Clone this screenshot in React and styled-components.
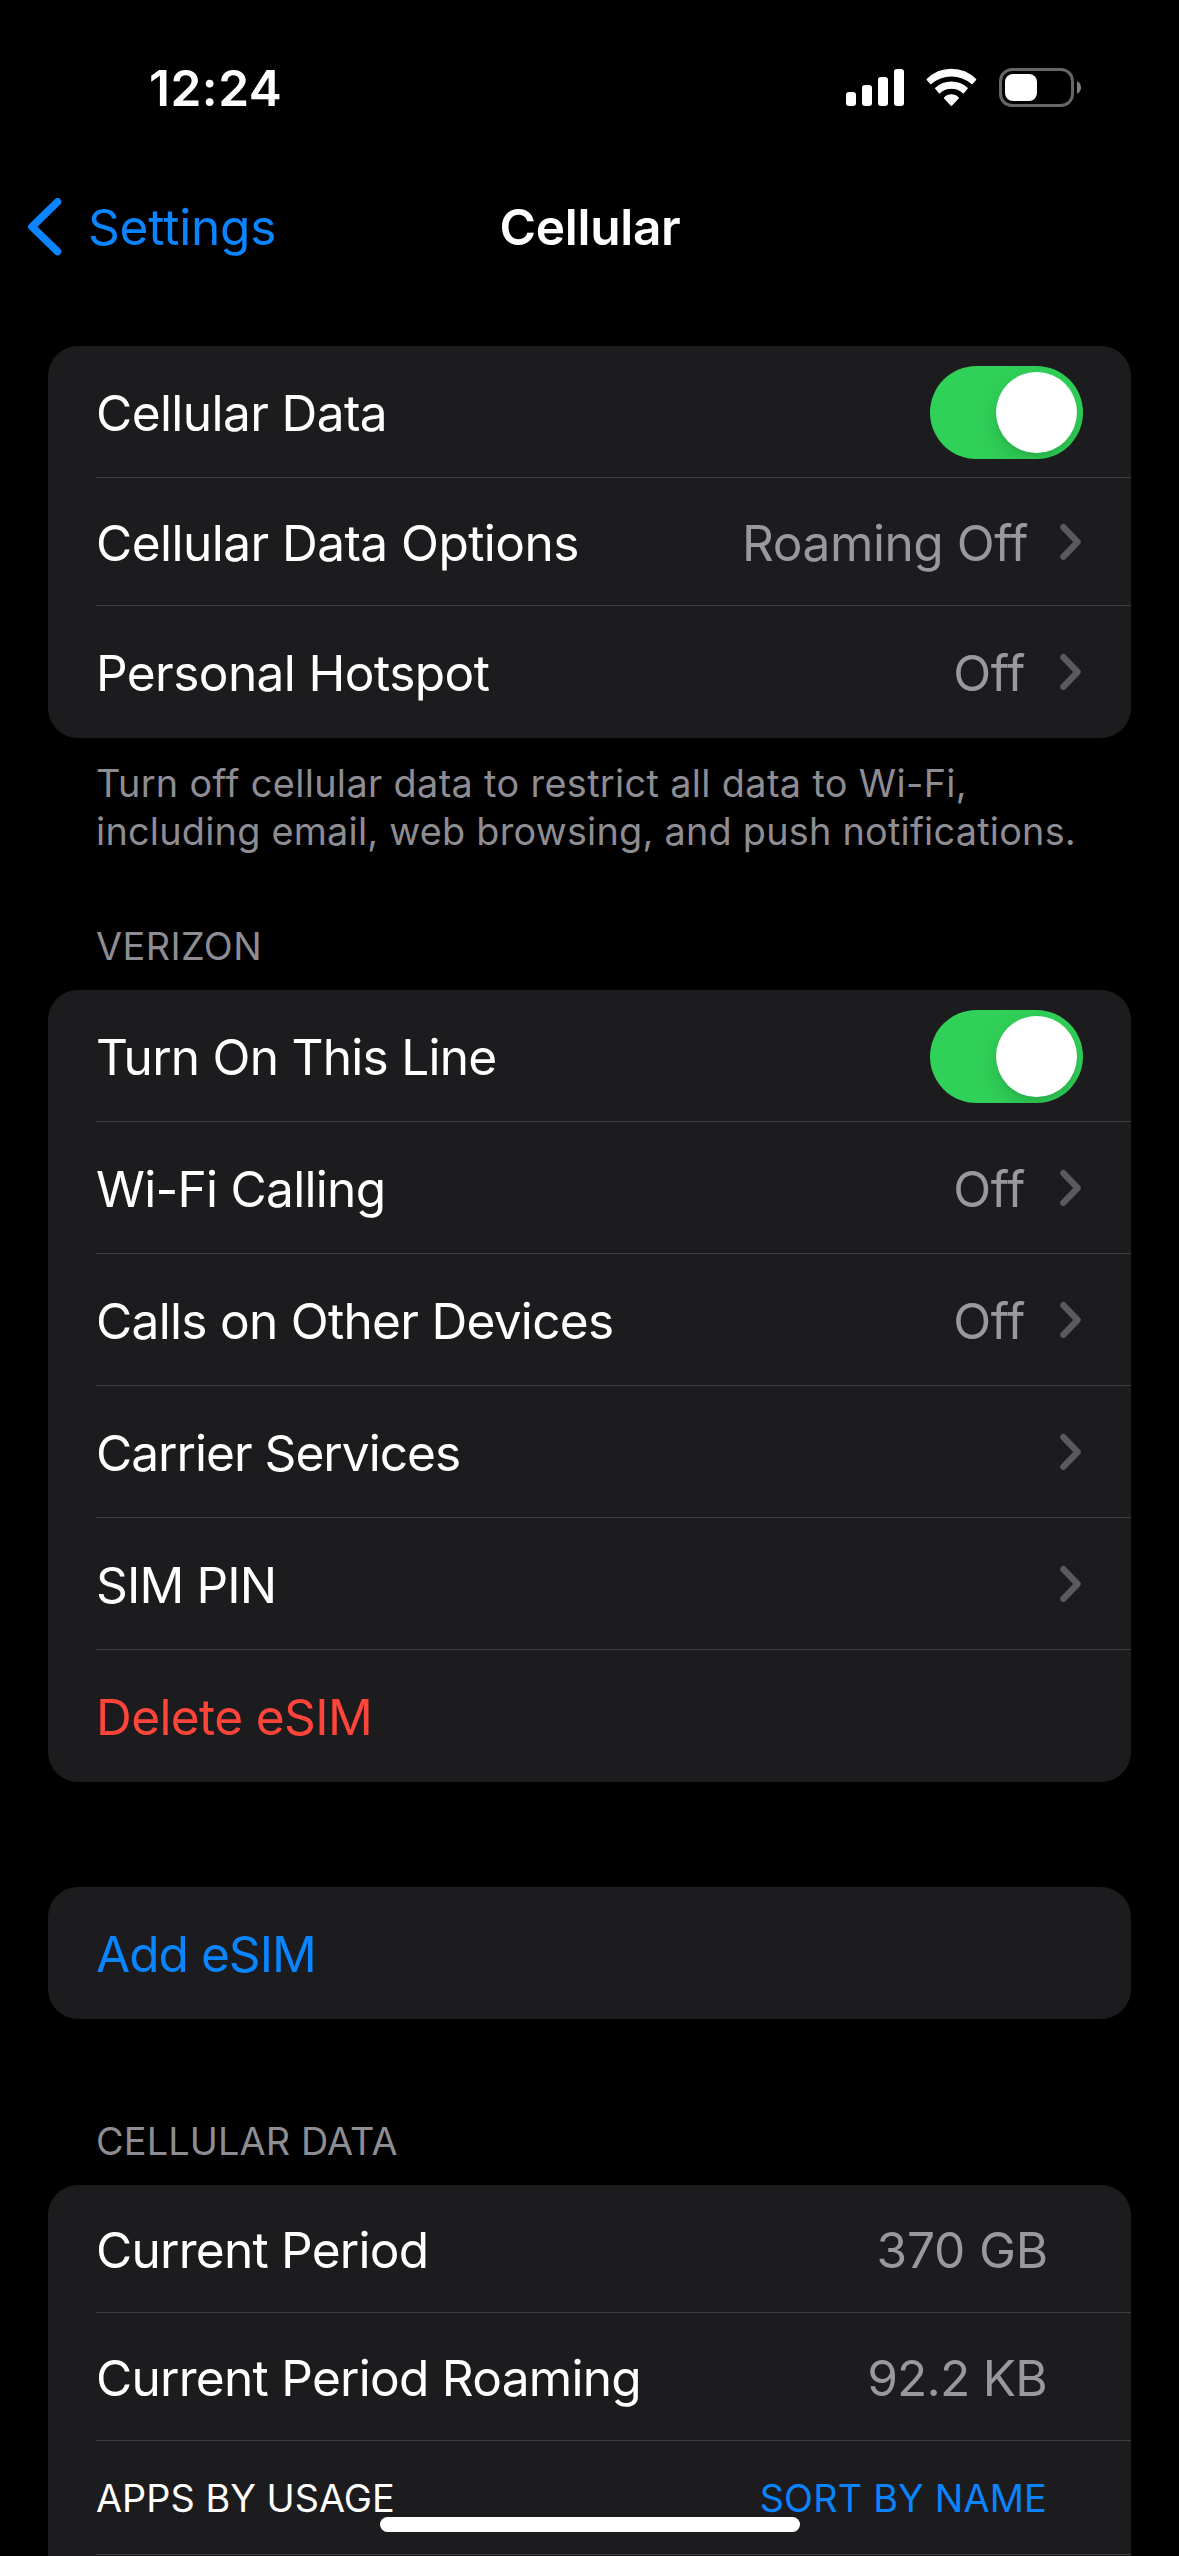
import React from 'react'
import styled, { createGlobalStyle, css } from 'styled-components'

const GlobalStyle = createGlobalStyle`
  body {
    margin: 0;
    background: #000000;
  }
`

const Screen = styled.div`
  position: relative;
  width: 1179px;
  height: 2556px;
  overflow: hidden;
  background: #000000;
  color: #ffffff;
  font-family: Inter, 'Liberation Sans', sans-serif;
  font-size: 49.6px;
  line-height: 60px;
  white-space: nowrap;
`

const StatusBar = styled.header`
  display: flex;
  align-items: center;
  justify-content: space-between;
  box-sizing: border-box;
  height: 175px;
  padding: 0 98px 0 149px;
`

const Time = styled.span`
  padding-top: 1px;
  font-weight: 600;
  letter-spacing: 0.5px;
`

const StatusIcons = styled.div`
  display: flex;
  align-items: center;
  gap: 22px;

  svg {
    display: block;
  }
`

const NavBar = styled.nav`
  display: grid;
  grid-template-columns: 1fr auto 1fr;
  align-items: center;
  height: 104px;
`

const Back = styled.a`
  display: flex;
  align-items: center;
  gap: 26px;
  padding-left: 28px;
  color: #0a84ff;
  letter-spacing: -0.2px;
`

const Title = styled.h1`
  margin: 0;
  padding-left: 1px;
  font-size: inherit;
  font-weight: 600;
  letter-spacing: -0.3px;
`

const Content = styled.main`
  padding: 67px 48px 0;
`

const Section = styled.section`
  margin-top: ${props => props.$spacing || 0}px;
`

const smallText = css`
  font-size: 37.8px;
  line-height: 48px;
`

const SectionTitle = styled.h2`
  ${smallText}
  margin: 0;
  padding: 0 48px 20px;
  color: #8d8d93;
  font-weight: 400;
  letter-spacing: ${props => props.$tracking}px;
`

const SectionNote = styled.p`
  ${smallText}
  margin: 0;
  padding: 21px 48px 0;
  color: #8d8d93;
`

const NoteLine = styled.span`
  display: block;
  letter-spacing: ${props => props.$tracking}px;
`

const Card = styled.div`
  overflow: hidden;
  background: #1c1c1e;
  border-radius: ${props => (props.$open ? '30px 30px 0 0' : '30px')};
`

const Row = styled.div`
  display: flex;
  align-items: center;
  box-sizing: border-box;
  height: ${props => props.$height || 132}px;
  margin-left: 48px;
  padding-right: ${props => props.$end || 50}px;
  box-shadow: inset 0 -1px #3d3d41;

  &:last-child {
    box-shadow: none;
  }
`

const colors = {
  red: '#ff453a',
  blue: '#0a84ff',
}

const Label = styled.span`
  padding-top: 2px;
  margin-right: auto;
  color: ${props => colors[props.$color] || '#ffffff'};
  letter-spacing: ${props => props.$tracking}px;
`

const Value = styled.span`
  padding-top: 2px;
  color: #98989f;
  letter-spacing: ${props => props.$tracking}px;
`

const Caption = styled.span`
  ${smallText}
  margin-right: auto;
  letter-spacing: 0.04px;
`

const SortButton = styled.a`
  ${smallText}
  color: #0a84ff;
  letter-spacing: 0.2px;
`

const RowChevron = styled.svg`
  display: block;
  margin-left: ${props => props.$gap || 35}px;
`

const Track = styled.span`
  display: flex;
  justify-content: flex-end;
  box-sizing: border-box;
  width: 153px;
  height: 93px;
  margin: 1px -2px 0 0;
  padding: 6px;
  overflow: hidden;
  background: #30d158;
  border-radius: 47px;
`

const Knob = styled.span`
  width: 81px;
  height: 81px;
  background: #ffffff;
  border-radius: 50%;
  box-shadow: 0 9px 24px rgba(0, 0, 0, 0.15), 0 3px 3px rgba(0, 0, 0, 0.05);
`

const HomeIndicator = styled.div`
  position: absolute;
  left: 380px;
  bottom: 24px;
  width: 420px;
  height: 15px;
  background: #ffffff;
  border-radius: 8px;
`

const SignalIcon = () => (
  <svg width="58" height="39" viewBox="0 0 58 39" fill="#ffffff">
    <rect x="0" y="24" width="10" height="14" rx="3" />
    <rect x="16" y="17" width="10" height="21" rx="3" />
    <rect x="32" y="9" width="10" height="29" rx="3" />
    <rect x="48" y="1" width="10" height="37" rx="3" />
  </svg>
)

const WifiIcon = () => (
  <svg
    width="51"
    height="39"
    viewBox="0 0 51 39"
    fill="#ffffff"
    stroke="#ffffff"
    strokeWidth="1.4"
    strokeLinejoin="round"
  >
    <path d="M1.2 11.6A34 34 0 0 1 49.6 11.6L46 15.6A31 31 0 0 0 4.8 15.6Z" />
    <path d="M9.7 20.2A23.6 23.6 0 0 1 41.1 20.2L37.3 24.8A17.5 17.5 0 0 0 13.5 24.8Z" />
    <path d="M18.6 29.9Q21.4 27 25.4 27T32.2 29.9L25.4 37.2Z" />
  </svg>
)

const BatteryIcon = () => (
  <svg width="82" height="39" viewBox="0 0 82 39">
    <rect x="1.5" y="1.5" width="72" height="36" rx="11.5" fill="none" stroke="#666666" strokeWidth="3" />
    <rect x="6" y="6" width="32" height="27" rx="8" fill="#ffffff" />
    <path d="M78 13.2C80.6 14.3 82 16.7 82 19.5S80.6 24.7 78 25.8Z" fill="#808080" />
  </svg>
)

const BackIcon = () => (
  <svg width="34" height="58" viewBox="0 0 34 58">
    <path
      d="M29.5 3.9L4 28.7L29.5 53.5"
      fill="none"
      stroke="#0a84ff"
      strokeWidth="7.6"
      strokeLinecap="round"
      strokeLinejoin="round"
    />
  </svg>
)

const Chevron = ({ gap }) => (
  <RowChevron $gap={gap} width="21" height="38" viewBox="0 0 21 38">
    <path
      d="M3.4 4.2L17.6 19L3.4 33.8"
      fill="none"
      stroke="#5a5a5e"
      strokeWidth="6.3"
      strokeLinecap="round"
      strokeLinejoin="round"
    />
  </RowChevron>
)

const Toggle = () => (
  <Track role="switch" aria-checked="true">
    <Knob />
  </Track>
)

const dataRows = [
  { label: 'Cellular Data', tracking: -0.6, toggle: true },
  {
    label: 'Cellular Data Options',
    tracking: -0.56,
    value: 'Roaming Off',
    valueTracking: -0.47,
    link: true,
    gap: 32,
    height: 128,
  },
  { label: 'Personal Hotspot', tracking: -0.6, value: 'Off', valueTracking: -0.3, link: true },
]

const lineRows = [
  { label: 'Turn On This Line', tracking: -0.76, toggle: true },
  { label: 'Wi-Fi Calling', tracking: -0.72, value: 'Off', valueTracking: -0.3, link: true },
  { label: 'Calls on Other Devices', tracking: -0.72, value: 'Off', valueTracking: -0.3, link: true },
  { label: 'Carrier Services', tracking: -0.99, link: true },
  { label: 'SIM PIN', tracking: -0.85, link: true },
  { label: 'Delete eSIM', tracking: -0.64, color: 'red' },
]

const addRows = [{ label: 'Add eSIM', tracking: -1, color: 'blue' }]

const usageRows = [
  { label: 'Current Period', tracking: -0.77, value: '370 GB', valueTracking: -0.19, height: 128, end: 83 },
  {
    label: 'Current Period Roaming',
    tracking: -0.75,
    value: '92.2 KB',
    valueTracking: -0.77,
    height: 128,
    end: 84,
  },
]

const renderRows = rows =>
  rows.map(row => (
    <Row key={row.label} $height={row.height} $end={row.end}>
      <Label $tracking={row.tracking} $color={row.color}>
        {row.label}
      </Label>
      {row.value && <Value $tracking={row.valueTracking}>{row.value}</Value>}
      {row.link && <Chevron gap={row.gap} />}
      {row.toggle && <Toggle />}
    </Row>
  ))

const App = () => {
  return (
    <Screen>
      <GlobalStyle />
      <StatusBar>
        <Time>12:24</Time>
        <StatusIcons>
          <SignalIcon />
          <WifiIcon />
          <BatteryIcon />
        </StatusIcons>
      </StatusBar>
      <NavBar>
        <Back>
          <BackIcon />
          Settings
        </Back>
        <Title>Cellular</Title>
      </NavBar>
      <Content>
        <Section>
          <Card>{renderRows(dataRows)}</Card>
          <SectionNote>
            <NoteLine $tracking={0.36}>Turn off cellular data to restrict all data to Wi-Fi,</NoteLine>
            <NoteLine $tracking={0.24}>including email, web browsing, and push notifications.</NoteLine>
          </SectionNote>
        </Section>
        <Section $spacing={67}>
          <SectionTitle $tracking={0.42}>VERIZON</SectionTitle>
          <Card>{renderRows(lineRows)}</Card>
        </Section>
        <Section $spacing={105}>
          <Card>{renderRows(addRows)}</Card>
        </Section>
        <Section $spacing={98}>
          <SectionTitle $tracking={0.15}>CELLULAR DATA</SectionTitle>
          <Card $open>
            {renderRows(usageRows)}
            <Row $height={114} $end={84}>
              <Caption>APPS BY USAGE</Caption>
              <SortButton>SORT BY NAME</SortButton>
            </Row>
            <Row />
          </Card>
        </Section>
      </Content>
      <HomeIndicator />
    </Screen>
  )
}

export default App
